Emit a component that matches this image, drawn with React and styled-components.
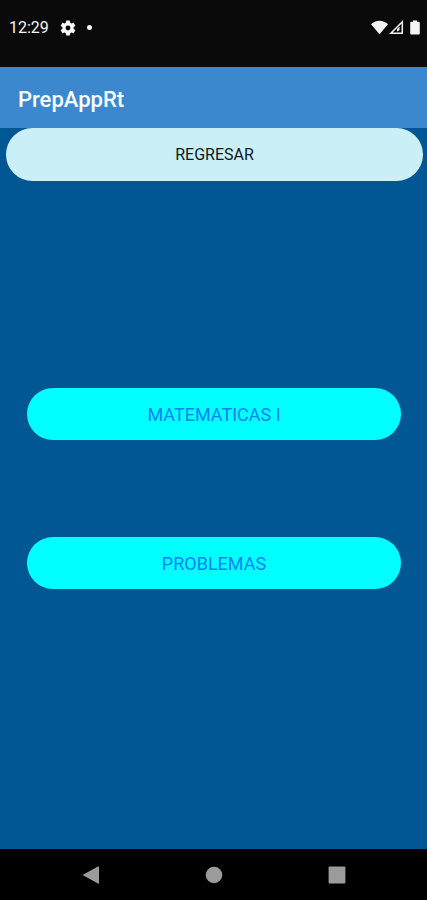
import React from "react";
import styled, { createGlobalStyle } from "styled-components";

const GlobalStyle = createGlobalStyle`
  *, *::before, *::after { box-sizing: border-box; }
  body { margin: 0; background: #005794; }
`;

const Screen = styled.div`
  display: flex;
  flex-direction: column;
  min-height: 100vh;
  background: #005794;
  font-family: Roboto, "Liberation Sans", sans-serif;
`;

const StatusBar = styled.div`
  display: flex;
  justify-content: space-between;
  height: 67px;
  padding: 16px 7px 0 9px;
  background: #0a0a0a;
  color: #f4f4f4;
`;

const StatusGroup = styled.div`
  display: flex;
  align-items: center;
  gap: ${({ $gap }) => $gap}px;
  height: 23px;
`;

const Clock = styled.time`
  font-size: 16px;
  line-height: 24px;
`;

const Dot = styled.span`
  width: 5px;
  height: 5px;
  border-radius: 50%;
  background: #f4f4f4;
`;

const AppBar = styled.header`
  display: flex;
  align-items: center;
  height: 61px;
  padding: 4px 18px 0;
  background: #3b88cf;
`;

const Title = styled.h1`
  margin: 0;
  color: #fff;
  font-size: 22px;
  font-weight: 500;
  line-height: 28px;
`;

const Content = styled.main`
  display: flex;
  flex: 1;
  flex-direction: column;
  padding: 0 4px 0 6px;
`;

const Pill = styled.button`
  width: 100%;
  height: 53px;
  padding: 0;
  border: 0;
  border-radius: 27px;
  font-family: inherit;
  font-weight: 400;
  cursor: pointer;
`;

const BackPill = styled(Pill)`
  background: #caeff7;
  color: #0b1a20;
  font-size: 16px;
`;

const TopicList = styled.nav`
  display: flex;
  flex-direction: column;
  gap: 97px;
  padding: 207px 22px 48px 21px;
`;

const TopicPill = styled(Pill)`
  height: 52px;
  background: #00ffff;
  color: #0782f2;
  font-size: 18px;
`;

const NavBar = styled.footer`
  display: flex;
  justify-content: center;
  gap: 75px;
  height: 51px;
  background: #000;
`;

const NavButton = styled.button`
  display: grid;
  place-items: center;
  width: 48px;
  height: 51px;
  padding: 0;
  border: 0;
  background: transparent;
  color: #9b9b9b;
  cursor: pointer;
`;

const GearIcon = () => (
  <svg width="18" height="18" viewBox="0 0 24 24" fill="currentColor" aria-hidden="true">
    <path d="M19.43 12.98c.04-.32.07-.64.07-.98s-.03-.66-.07-.98l2.11-1.65c.19-.15.24-.42.12-.64l-2-3.46c-.12-.22-.39-.3-.61-.22l-2.49 1c-.52-.4-1.08-.73-1.69-.98l-.38-2.65A.49.49 0 0 0 14 2h-4c-.25 0-.46.18-.49.42l-.38 2.65c-.61.25-1.17.59-1.69.98l-2.49-1c-.23-.09-.49 0-.61.22l-2 3.46c-.13.22-.07.49.12.64l2.11 1.65c-.04.32-.07.65-.07.98s.03.66.07.98l-2.11 1.65c-.19.15-.24.42-.12.64l2 3.46c.12.22.39.3.61.22l2.49-1c.52.4 1.08.73 1.69.98l.38 2.65c.03.24.24.42.49.42h4c.25 0 .46-.18.49-.42l.38-2.65c.61-.25 1.17-.59 1.69-.98l2.49 1c.23.09.49 0 .61-.22l2-3.46c.12-.22.07-.49-.12-.64l-2.11-1.65zM12 15.2a3.2 3.2 0 1 1 0-6.4 3.2 3.2 0 0 1 0 6.4z" />
  </svg>
);

const WifiIcon = () => (
  <svg width="17" height="15" viewBox="0 0 17 15" fill="currentColor" aria-hidden="true">
    <path d="M0 4.2C2.2 2 5.1.7 8.5.7S14.8 2 17 4.2L8.5 14.3z" />
  </svg>
);

const SignalIcon = () => (
  <svg width="15" height="15" viewBox="0 0 15 15" aria-hidden="true">
    <path d="M1.8 13.3L13.3 1.8v11.5z" fill="none" stroke="currentColor" strokeWidth="1.5" />
    <path d="M10.5 6.500v3.800L8 11.500V9z" fill="currentColor" />
  </svg>
);

const BatteryIcon = () => (
  <svg width="10" height="15" viewBox="0 0 10 15" fill="currentColor" aria-hidden="true">
    <path d="M3 .5h4v1.300h1.500q1.300 0 1.300 1V13.500q0 1-1 1H1.200q-1 0-1-1V2.800q0-1 1.300-1H3z" />
  </svg>
);

const BackIcon = () => (
  <svg width="18" height="18" viewBox="0 0 18 18" fill="currentColor" aria-hidden="true">
    <path d="M.5 9L16 .4Q17 0 17 .8v16.400q0 .8-1 .4z" />
  </svg>
);

const HomeIcon = () => (
  <svg width="18" height="18" viewBox="0 0 18 18" fill="currentColor" aria-hidden="true">
    <circle cx="9" cy="9" r="8.300" />
  </svg>
);

const RecentsIcon = () => (
  <svg width="18" height="18" viewBox="0 0 18 18" fill="currentColor" aria-hidden="true">
    <rect x=".6" y=".6" width="16.800" height="16.800" rx="1" />
  </svg>
);

const topics = ["MATEMATICAS I", "PROBLEMAS"];

export default function App() {
  return (
    <>
      <GlobalStyle />
      <Screen>
        <StatusBar>
          <StatusGroup $gap={10}>
            <Clock>12:29</Clock>
            <GearIcon />
            <Dot />
          </StatusGroup>
          <StatusGroup $gap={6}>
            <StatusGroup $gap={1}>
              <WifiIcon />
              <SignalIcon />
            </StatusGroup>
            <BatteryIcon />
          </StatusGroup>
        </StatusBar>
        <AppBar>
          <Title>PrepAppRt</Title>
        </AppBar>
        <Content>
          <BackPill type="button">REGRESAR</BackPill>
          <TopicList>
            {topics.map((topic) => (
              <TopicPill type="button" key={topic}>
                {topic}
              </TopicPill>
            ))}
          </TopicList>
        </Content>
        <NavBar>
          <NavButton type="button" aria-label="Back">
            <BackIcon />
          </NavButton>
          <NavButton type="button" aria-label="Home">
            <HomeIcon />
          </NavButton>
          <NavButton type="button" aria-label="Recents">
            <RecentsIcon />
          </NavButton>
        </NavBar>
      </Screen>
    </>
  );
}
